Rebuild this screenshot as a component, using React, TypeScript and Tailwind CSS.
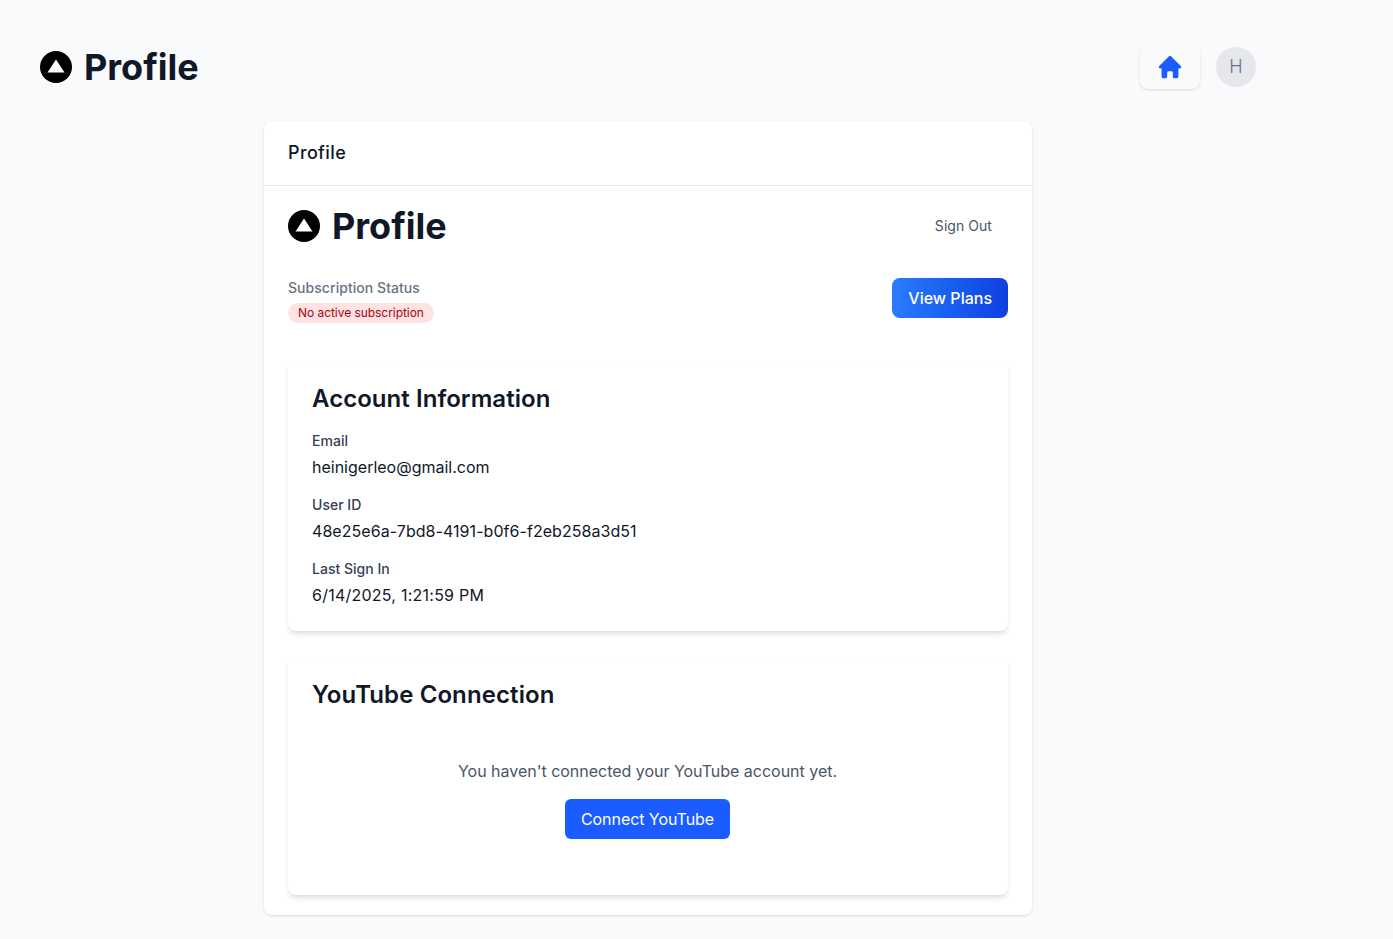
function LogoMark() {
  return (
    <svg width="32" height="32" viewBox="0 0 32 32" className="shrink-0">
      <circle cx="16" cy="16" r="16" fill="#000" />
      <path d="M16 8.5 L24.5 21.5 H7.5 Z" fill="#fff" />
    </svg>
  );
}

function Title() {
  return (
    <div className="flex items-center gap-3">
      <LogoMark />
      <h1 className="text-4xl font-bold text-gray-900">Profile</h1>
    </div>
  );
}

function Info({ label, value, className }: { label: string; value: string; className?: string }) {
  return (
    <div>
      <div className="text-sm font-medium tracking-[0.02px] text-gray-700">{label}</div>
      <div className={`mt-1 text-base text-gray-900 ${className ?? ""}`}>{value}</div>
    </div>
  );
}

function HomeIcon() {
  return (
    <svg width="28" height="28" viewBox="0 0 20 20" fill="#1a5cff" aria-hidden="true">
      <path d="M10.7 2.3a1 1 0 0 0-1.4 0l-7 7A1 1 0 0 0 3 11h1v6a1 1 0 0 0 1 1h2a1 1 0 0 0 1-1v-3a1 1 0 0 1 1-1h2a1 1 0 0 1 1 1v3a1 1 0 0 0 1 1h2a1 1 0 0 0 1-1v-6h1a1 1 0 0 0 .7-1.7l-7-7z" />
    </svg>
  );
}

export default function App() {
  return (
    <div className="min-h-screen bg-[#f9fafb] pl-10 pt-[45px] font-['Inter',sans-serif]">
      <div className="w-[1216px]">
        <header className="flex items-center justify-between">
          <Title />
          <div className="flex items-center gap-4">
            <button className="flex h-11 w-[60px] items-center justify-center rounded-lg bg-[#f9fafb] shadow">
              <HomeIcon />
            </button>
            <div className="flex h-10 w-10 items-center justify-center rounded-full bg-gray-200 text-lg font-light text-gray-500">
              H
            </div>
          </div>
        </header>

        <main className="mx-auto mt-8 w-[768px] rounded-lg bg-white shadow">
          <div className="border-b border-gray-200 px-6 py-5">
            <h2 className="text-lg leading-6 font-medium tracking-[0.02em] text-gray-900">Profile</h2>
          </div>
          <div className="px-6 pb-5 pt-5">
            <div className="flex items-center justify-between">
              <Title />
              <button className="px-4 py-2 text-sm tracking-[0.05px] text-gray-600">Sign Out</button>
            </div>

            <div className="mt-[32px] flex items-start justify-between">
              <div>
                <div className="text-sm font-medium tracking-[0.05px] text-gray-500">Subscription Status</div>
                <span className="mt-[5px] inline-block rounded-full bg-red-100 px-2.5 py-0.5 text-xs tracking-[-0.05px] text-red-800">
                  No active subscription
                </span>
              </div>
              <button className="h-10 rounded-lg bg-gradient-to-r from-[#2b7bff] to-[#0f3fe0] px-4 text-base font-medium text-white">
                View Plans
              </button>
            </div>

            <section className="mt-[38px] rounded-lg bg-white p-6 shadow-md">
              <h3 className="text-2xl leading-[28px] font-semibold tracking-[0.05px] text-gray-900">Account Information</h3>
              <div className="mt-[18px] flex flex-col gap-4">
                <Info label="Email" value="heinigerleo@gmail.com" />
                <Info label="User ID" value="48e25e6a-7bd8-4191-b0f6-f2eb258a3d51" className="tracking-[0.055px]" />
                <Info label="Last Sign In" value="6/14/2025, 1:21:59 PM" className="tracking-[0.24px]" />
              </div>
            </section>

            <section className="mt-[26px] rounded-lg bg-white p-6 shadow-md">
              <h3 className="text-2xl leading-[28px] font-semibold tracking-[0.1px] text-gray-900">YouTube Connection</h3>
              <div className="flex flex-col items-center pb-8 pr-px pt-[50px]">
                <p className="text-base tracking-[-0.02px] text-gray-600">You haven't connected your YouTube account yet.</p>
                <button className="mt-4 h-10 w-[165px] rounded-md bg-[#1a5cff] text-base tracking-[-0.06px] text-white">
                  Connect YouTube
                </button>
              </div>
            </section>
          </div>
        </main>
      </div>
    </div>
  );
}
